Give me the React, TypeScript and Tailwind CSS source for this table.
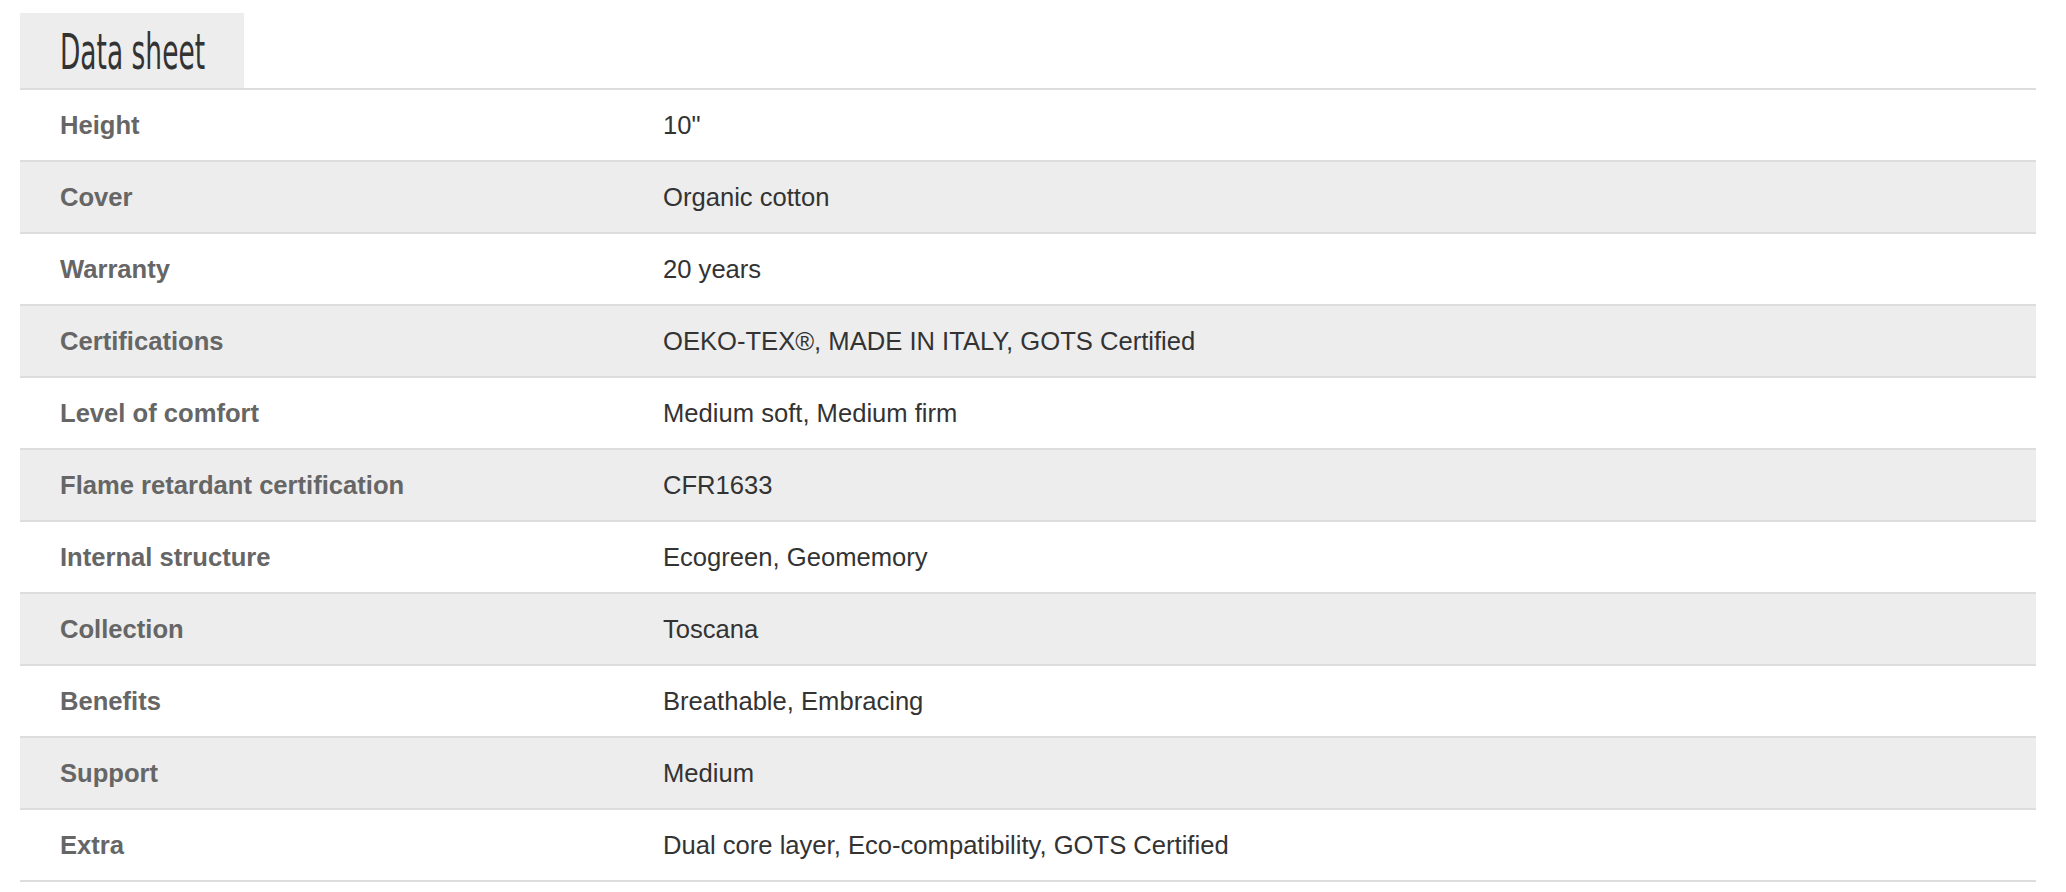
const ROWS: [string, string][] = [
  ['Height', '10"'],
  ['Cover', 'Organic cotton'],
  ['Warranty', '20 years'],
  ['Certifications', 'OEKO-TEX®, MADE IN ITALY, GOTS Certified'],
  ['Level of comfort', 'Medium soft, Medium firm'],
  ['Flame retardant certification', 'CFR1633'],
  ['Internal structure', 'Ecogreen, Geomemory'],
  ['Collection', 'Toscana'],
  ['Benefits', 'Breathable, Embracing'],
  ['Support', 'Medium'],
  ['Extra', 'Dual core layer, Eco-compatibility, GOTS Certified'],
];

export default function App() {
  return (
    <div className="min-h-screen bg-white pl-[20px] pr-[30px] pt-[13px] font-['Liberation_Sans',Arial,sans-serif]">
      {/* Tab header */}
      <div className="flex border-b-2 border-[#dddddd]">
        <div className="h-[75px] w-[224px] bg-[#ededed] pl-[40px] flex items-center overflow-hidden">
          <h2 className="origin-left scale-x-[0.54] text-[49px] leading-none whitespace-nowrap text-[#333333] font-['DejaVu_Sans',sans-serif] font-normal pt-[4px]">
            Data sheet
          </h2>
        </div>
      </div>

      {/* Spec rows */}
      <div>
        {ROWS.map(([label, value], i) => (
          <div
            key={label}
            className={`grid grid-cols-[603px_1fr] h-[72px] items-center border-b-2 border-[#dddddd] text-[25.6px] ${
              i % 2 === 1 ? 'bg-[#ededed]' : 'bg-white'
            }`}
          >
            <div className="pl-[40px] font-bold text-[#666666]">{label}</div>
            <div className="pl-[40px] text-[#333333]">{value}</div>
          </div>
        ))}
      </div>
    </div>
  );
}
